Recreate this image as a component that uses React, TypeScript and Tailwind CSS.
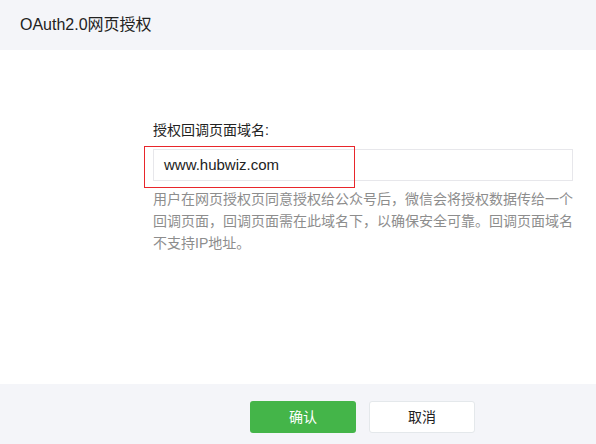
import React from "react";

export default function App() {
  const font = { fontFamily: '"Liberation Sans", "Noto Sans CJK SC", sans-serif' };
  return (
    <div className="w-[596px] h-[444px] flex flex-col bg-white overflow-hidden" style={font}>
      <div className="h-[50px] bg-[#f4f5f9] flex items-center pl-[20px] text-[16px] leading-[20px] text-[#222]">
        OAuth2.0网页授权
      </div>
      <div className="flex-1 bg-white pl-[153px] pt-[70px]">
        <div className="w-[420px]">
          <div className="text-[14px] leading-[20px] text-[#222] mb-[9px]">授权回调页面域名:</div>
          <div className="relative">
            <div className="h-[32px] border border-[#e7e7eb] flex items-center pl-[10px] text-[15px] text-[#222]">
              www.hubwiz.com
            </div>
            <div className="absolute left-[-9px] top-[-3px] w-[211px] h-[42px] border border-[#e8262b]" />
          </div>
          <p className="mt-[7px] text-[14px] leading-[22px] text-[#8d8d8d]">
            用户在网页授权页同意授权给公众号后，微信会将授权数据传给一个回调页面，回调页面需在此域名下，以确保安全可靠。回调页面域名不支持IP地址。
          </p>
        </div>
      </div>
      <div className="h-[60px] bg-[#f4f5f9] flex items-start pt-[17px] pl-[250px] gap-[13px]">
        <button className="w-[106px] h-[32px] rounded-[3px] bg-[#44b549] text-white text-[14px] flex items-center justify-center">
          确认
        </button>
        <button className="w-[106px] h-[32px] rounded-[3px] bg-white border border-[#e4e8eb] text-[#222] text-[14px] flex items-center justify-center">
          取消
        </button>
      </div>
    </div>
  );
}
